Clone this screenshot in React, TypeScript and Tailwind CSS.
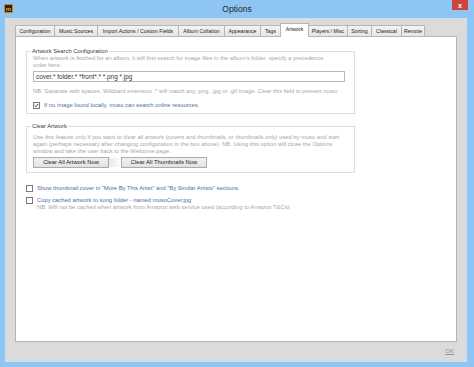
const tabs = [
  { label: "Configuration", w: "w-[40px]" },
  { label: "Music Sources", w: "w-[44px]" },
  { label: "Import Actions / Custom Fields", w: "w-[82px]" },
  { label: "Album Collation", w: "w-[47px]" },
  { label: "Appearance", w: "w-[37px]" },
  { label: "Tags", w: "w-[21px]" },
  { label: "Artwork", w: "w-[29px]", active: true },
  { label: "Players / Misc", w: "w-[40px]" },
  { label: "Sorting", w: "w-[25px]" },
  { label: "Classical", w: "w-[31px]" },
  { label: "Remote", w: "w-[24px]" },
];

function Check({ checked }: { checked?: boolean }) {
  return (
    <span className="flex h-[7px] w-[7px] shrink-0 items-center justify-center border border-[#7a7a7a] bg-white">
      {checked && (
        <svg viewBox="0 0 8 8" className="h-[7px] w-[7px]" aria-hidden>
          <path d="M1.2 4.2l1.8 1.9L6.8 1.6" fill="none" stroke="#222" strokeWidth={1.4} />
        </svg>
      )}
    </span>
  );
}

function Group({ title, children }: { title: string; children: React.ReactNode }) {
  return (
    <div className="relative w-[329px] border border-[#dcdcdc] px-[6px] pt-[3px]">
      <span className="absolute -top-[4px] left-[4px] bg-white px-[1px] text-[5.8px] leading-[7px] text-[#3a3a3a]">
        {title}
      </span>
      {children}
    </div>
  );
}

export default function App() {
  return (
    <div className="flex h-[367px] w-[474px] flex-col bg-[#8fc5f2] font-['Liberation_Sans',Arial,sans-serif] text-[5.8px] leading-[7px]">
      {/* title bar */}
      <div className="relative flex h-[18px] shrink-0 items-center justify-center">
        <div className="absolute left-[4px] top-[4px] flex h-[9px] w-[9px] items-center justify-center border border-[#c98a1a] bg-[#2b2110] text-[6px] font-bold leading-none text-[#e3a03a]">
          m
        </div>
        <span className="text-[8.5px] leading-none text-[#1f1f1f]">Options</span>
        <div className="absolute right-[6px] top-0 flex h-[10px] w-[16px] items-center justify-center bg-[#c8463f] text-[7px] font-bold leading-none text-white">
          x
        </div>
      </div>

      {/* client */}
      <div className="mb-[5px] ml-[5px] mr-[7px] flex flex-1 flex-col border border-[#c9dff2] bg-[#dcdbda]">
        <div className="ml-[9px] mr-[9px] mt-[4px] flex flex-1 flex-col">
          {/* tabs */}
          <div className="flex h-[13px] items-end pl-px text-[5.2px]">
            {tabs.map((t) =>
              t.active ? (
                <div
                  key={t.label}
                  className={`${t.w} relative z-10 -mb-px -ml-px flex h-[14px] items-start justify-center whitespace-nowrap border border-b-0 border-[#b5b5b5] bg-white pt-[2px] text-[#222]`}
                >
                  {t.label}
                </div>
              ) : (
                <div
                  key={t.label}
                  className={`${t.w} -ml-px flex h-[11px] items-center justify-center whitespace-nowrap border border-b-0 border-[#b5b5b5] bg-gradient-to-b from-[#f3f3f3] to-[#e6e6e6] text-[#222]`}
                >
                  {t.label}
                </div>
              )
            )}
          </div>

          {/* panel */}
          <div className="flex flex-1 flex-col border border-[#b5b5b5] bg-white pl-[10px] pt-[14px]">
            <Group title="Artwork Search Configuration">
              <p className="text-[#a6a6a6]">
                When artwork is fetched for an album, it will first search for image files in the album's folder, specify a precedence
                <br />
                order here:
              </p>
              <div className="mt-[2px] flex h-[11px] w-[312px] items-center border border-[#b8b8b8] px-[2px] text-[6.4px] text-[#333]">
                cover.* folder.* *front*.* *.png *.jpg
              </div>
              <p className="mt-[6px] text-[#a6a6a6]">
                NB. Separate with spaces. Wildcard extension .* will match any .png, .jpg or .gif image. Clear this field to prevent muso
              </p>
              <div className="mb-[4px] mt-[7px] flex items-center gap-[4px]">
                <Check checked />
                <span className="text-[#4a6ea6]">If no image found locally, muso can search online resources.</span>
              </div>
            </Group>

            <div className="mt-[12px]">
              <Group title="Clear Artwork">
                <p className="mt-[4px] text-[#a6a6a6]">
                  Use this feature only if you want to clear all artwork (covers and thumbnails, or thumbnails only) used by muso and start
                  <br />
                  again (perhaps necessary after changing configuration in the box above). NB. Using this option will close the Options
                  <br />
                  window and take the user back to the Welcome page.
                </p>
                <div className="mb-[4px] mt-[2px] flex items-center">
                  <div className="flex h-[11px] w-[76px] items-center justify-center border border-[#acacac] bg-gradient-to-b from-[#f2f2f2] to-[#e2e2e2] text-[#222]">
                    Clear All Artwork Now
                  </div>
                  <div className="h-[9px] w-[12px] bg-gradient-to-r from-[#e8e8e8] to-white" />
                  <div className="flex h-[11px] w-[86px] items-center justify-center border border-[#acacac] bg-gradient-to-b from-[#f2f2f2] to-[#e2e2e2] text-[#222]">
                    Clear All Thumbnails Now
                  </div>
                </div>
              </Group>
            </div>

            <div className="mt-[12px] flex items-center gap-[4px]">
              <Check />
              <span className="text-[#4a6ea6]">
                Show thumbnail cover in "More By This Artist" and "By Similar Artists" sections.
              </span>
            </div>
            <div className="mt-[5px] flex items-center gap-[4px]">
              <Check />
              <span className="text-[#4a6ea6]">Copy cached artwork to song folder - named musoCover.jpg</span>
            </div>
            <p className="pl-[11px] text-[#a6a6a6]">
              NB. Will not be cached when artwork from Amazon web service used (according to Amazon T&amp;Cs).
            </p>
          </div>
        </div>

        {/* footer */}
        <div className="flex h-[19px] items-center justify-end pr-[12px]">
          <span className="text-[6px] text-[#7d98b8] underline">OK</span>
        </div>
      </div>
    </div>
  );
}
